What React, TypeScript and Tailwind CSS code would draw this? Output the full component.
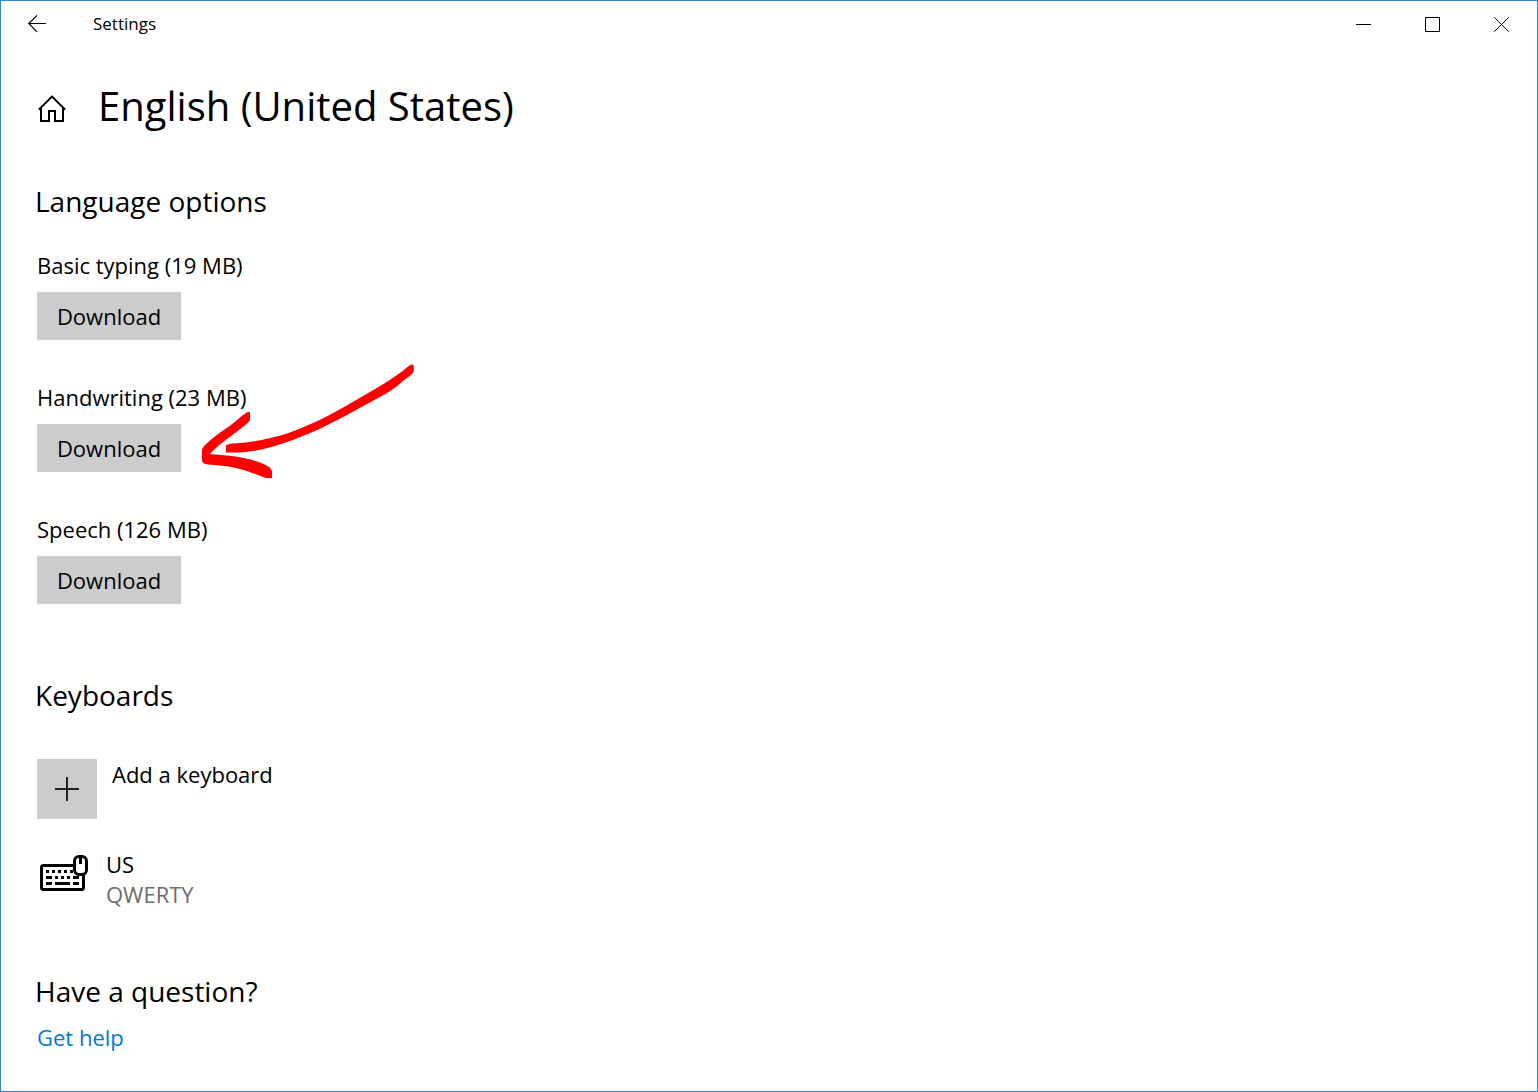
import type { ReactNode } from "react";

const downloads = [
  { id: "typing", label: "Basic typing (19 MB)", marked: false },
  { id: "handwriting", label: "Handwriting (23 MB)", marked: true },
  { id: "speech", label: "Speech (126 MB)", marked: false },
];

function BackIcon() {
  return (
    <svg width="18" height="18" viewBox="0 0 18 18" fill="none" stroke="#000" strokeWidth="1.2" aria-hidden="true">
      <path d="M18 8.5H.8M9 .4.8 8.5 9 16.8" />
    </svg>
  );
}

function HomeIcon() {
  return (
    <svg width="28" height="28" viewBox="0 0 28 28" fill="none" stroke="#000" strokeWidth="2" aria-hidden="true">
      <path d="M.8 14.6 14 1.600l13.200 13" />
      <path d="M3 12.400V26h8v-10h6v10h8V12.400" />
    </svg>
  );
}

function KeyboardMouseIcon() {
  return (
    <svg width="48" height="38" viewBox="0 0 48 38" fill="none" stroke="#000" strokeWidth="3" aria-hidden="true">
      <path d="M34 10.5H3.5a2 2 0 0 0-2 2v20a2 2 0 0 0 2 2h38a2 2 0 0 0 2-2V20" />
      <rect x="34.5" y="1.5" width="12" height="18" rx="4.5" fill="#fff" />
      <path d="M40.500 2v7" />
      <path d="M6 16.500h3M12 16.500h3M18 16.500h3M24 16.500h3M30 16.500h3" />
      <path d="M6 22.500h6M15 22.500h3M21 22.500h3M27 22.500h3M33 22.500h6" />
      <path d="M6 28.500h6M15 28.500h15M33 28.500h6" />
    </svg>
  );
}

function HandDrawnArrow() {
  return (
    <svg
      className="pointer-events-none absolute -top-5 left-[163px]"
      width="220"
      height="120"
      viewBox="200 362 220 120"
      fill="#f00"
      aria-hidden="true"
    >
      <path d="M412 364.500C413.500 364.500 414 365.500 413.800 367V371C413 374.500 408 377 403 381C395 388 388 393 379 397.500L346 415.500C328 425 312 433 294 439.500C274 447 255 452 239 452.600H226V445.300L230 443.700C250 442.500 267 439.500 284 434.500C305 427.500 325 418 344 407L376 388.500C386 383 394 377 402 371.500C406 368.500 409 365 412 364.500Z" />
      <path d="M247 412.300L250 412V420.500C246 424.500 242 428 237 431.500C228 438.500 218 445 210 454L232 456C245 457.500 255 460.500 264 464.200C269 466.500 271.500 468.500 272 471V478H266C257 475 250 471.500 240 469C228 465.500 218 465.500 206 464.200C203 463.500 202 462 202 460V450C203 446 207 443.500 210 440.500C216 435 224 430 231 425C237 420.500 241 416 247 412.300Z" />
    </svg>
  );
}

function SectionTitle({ children }: { children: ReactNode }) {
  return <h2 className="-ml-0.5 text-[28px] leading-10">{children}</h2>;
}

function CaptionButton({ label, children }: { label: string; children: ReactNode }) {
  return (
    <button type="button" aria-label={label} className="flex w-[69px] items-center justify-center hover:bg-gray-200">
      <svg width="15" height="15" viewBox="0 0 15 15" fill="none" stroke="#000" strokeWidth="1" aria-hidden="true">
        {children}
      </svg>
    </button>
  );
}

export default function App() {
  return (
    <div className="flex min-h-screen flex-col border border-[#2a86d1] bg-white font-['Open_Sans','Noto_Sans',sans-serif] text-[22px] leading-[30px] text-black">
      <header className="flex h-[47px] items-stretch pr-px">
        <button type="button" aria-label="Back" className="flex w-[72px] items-center justify-center pb-0.5 hover:bg-gray-200">
          <BackIcon />
        </button>
        <span className="ml-5 self-center pb-0.5 text-[17px]">Settings</span>
        <div className="ml-auto flex">
          <CaptionButton label="Minimize">
            <path d="M0 7.500h15" />
          </CaptionButton>
          <CaptionButton label="Maximize">
            <path d="M.5.5h14v14H.5z" />
          </CaptionButton>
          <CaptionButton label="Close">
            <path d="m.3.3 14.400 14.400M14.700.3.3 14.700" />
          </CaptionButton>
        </div>
      </header>

      <main className="px-9 pt-[30px] pb-9">
        <div className="flex items-center gap-8">
          <button type="button" aria-label="Home" className="mt-1.5 ml-px">
            <HomeIcon />
          </button>
          <h1 className="text-[40px] leading-14">English (United States)</h1>
        </div>

        <section className="mt-[47px]">
          <SectionTitle>Language options</SectionTitle>
          <ul className="mt-[29px] flex flex-col gap-[42px]">
            {downloads.map((item) => (
              <li key={item.id} className="relative">
                <p id={item.id}>{item.label}</p>
                <button
                  type="button"
                  aria-describedby={item.id}
                  className="mt-3 block h-12 w-36 bg-[#ccc] hover:bg-[#bbb]"
                >
                  Download
                </button>
                {item.marked && <HandDrawnArrow />}
              </li>
            ))}
          </ul>
        </section>

        <section className="mt-[71px]">
          <SectionTitle>Keyboards</SectionTitle>
          <button type="button" className="mt-11 flex items-start gap-[15px] text-left">
            <span className="flex size-15 items-center justify-center bg-[#ccc]">
              <svg width="24" height="24" viewBox="0 0 24 24" stroke="#222" strokeWidth="2" aria-hidden="true">
                <path d="M0 12h24M12 0v24" />
              </svg>
            </span>
            <span>Add a keyboard</span>
          </button>
          <div className="mt-[30px] flex items-start gap-[18px]">
            <span className="mt-1.5 ml-[3px]">
              <KeyboardMouseIcon />
            </span>
            <div>
              <p>US</p>
              <p className="text-[#6d6d6d]">QWERTY</p>
            </div>
          </div>
        </section>

        <section className="mt-[62px]">
          <SectionTitle>Have a question?</SectionTitle>
          <a href="#help" className="mt-[11px] inline-block text-[#0078d7]">
            Get help
          </a>
        </section>
      </main>
    </div>
  );
}
